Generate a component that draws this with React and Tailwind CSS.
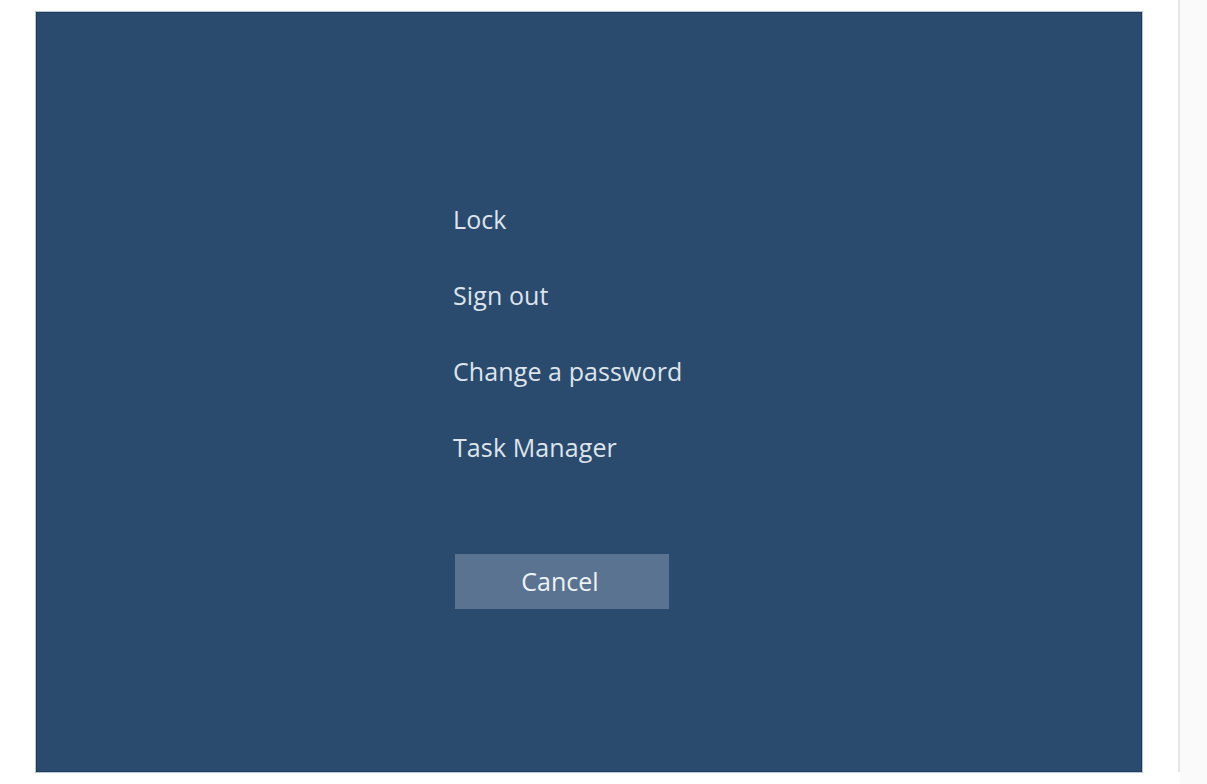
export default function App() {
  const items = ["Lock", "Sign out", "Change a password", "Task Manager"];
  return (
    <div className="w-[1207px] h-[784px] bg-white flex overflow-hidden" style={{ fontFamily: '"Open Sans", "Noto Sans", sans-serif' }}>
      <div className="ml-[36px] mt-[12px] w-[1106px] h-[760px] bg-[#2a4a6e] border border-[#1f3b5c] shadow-[0_0_0_1px_#b8c6d6] flex flex-col pl-[416px] pt-[169px]">
        {items.map((t) => (
          <div key={t} className="h-[76px] flex items-center text-[25px] tracking-[0.1px] text-[#dde4ec]">
            {t}
          </div>
        ))}
        <button className="mt-[68px] ml-[2px] w-[214px] h-[55px] pr-[4px] bg-[#5a7391] text-[25px] text-[#eef2f6] flex items-center justify-center">
          Cancel
        </button>
      </div>
      <div className="ml-[36px] mt-0 h-[772px] w-[2px] bg-[#e6e6e6]"></div>
      <div className="flex-1 h-full bg-[#fafafa]"></div>
    </div>
  );
}
